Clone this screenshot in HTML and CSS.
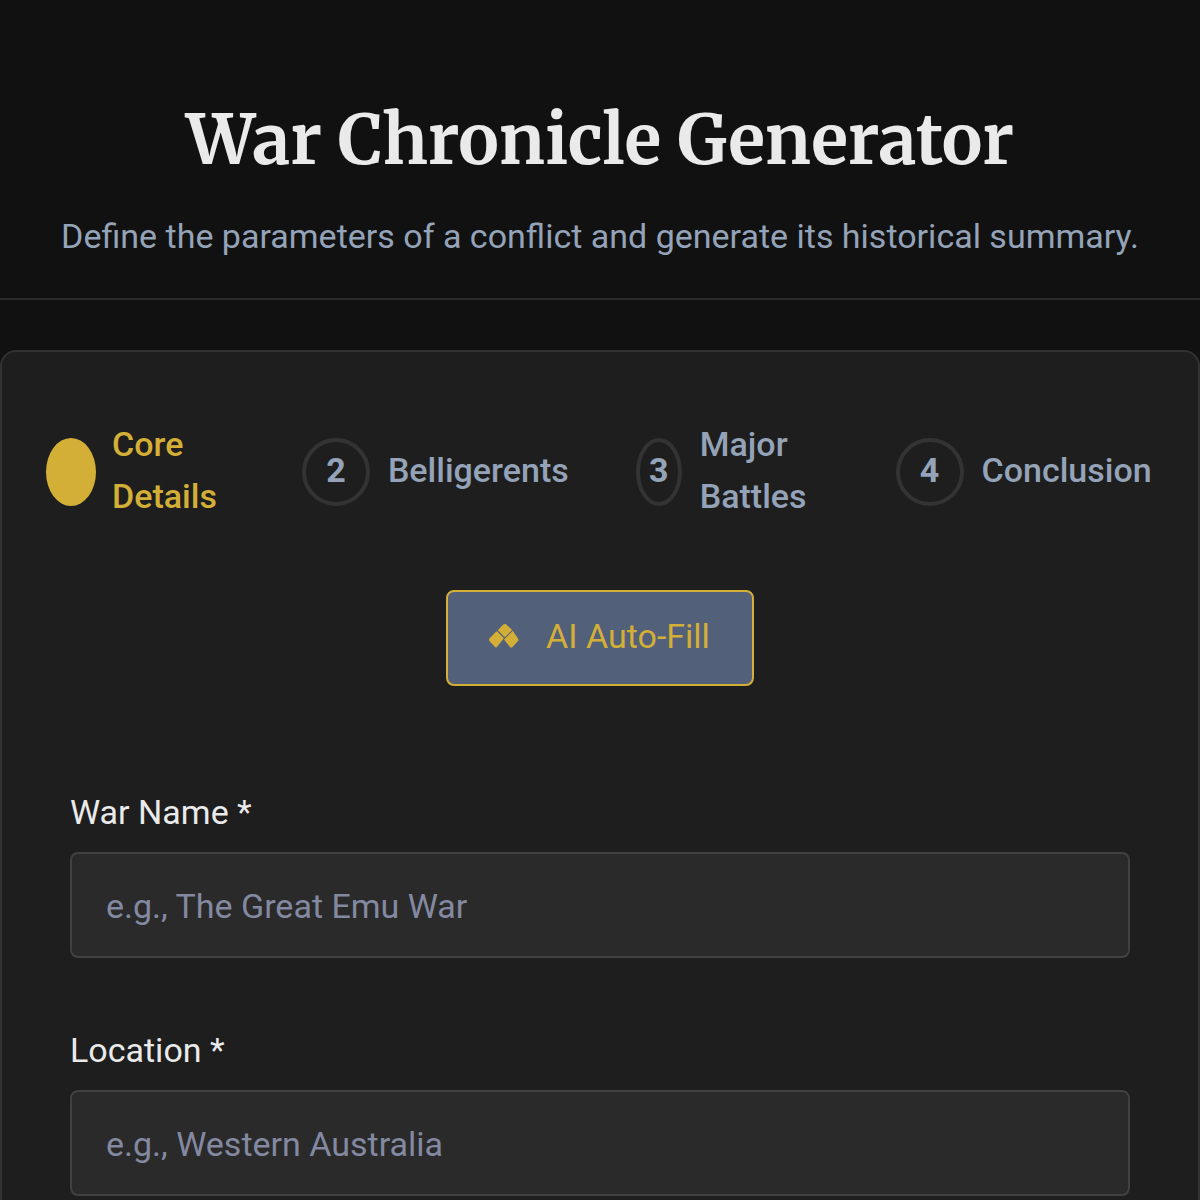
FILE: index.html
```html
<!DOCTYPE html>
<html lang="en">
  <head>
    <meta charset="UTF-8" />
    <meta name="viewport" content="width=device-width, initial-scale=1.0" />
    <title>War Chronicle Generator</title>
    <link rel="stylesheet" href="styles.css">
  </head>
  <body>
    <header class="page-header">
      <h1>War Chronicle Generator</h1>
      <p>Define the parameters of a conflict and generate its historical summary.</p>
    </header>

    <main class="card">
      <ol class="steps">
        <li class="step active">
          <span class="step-number"></span>
          <span class="step-label">Core Details</span>
        </li>
        <li class="step">
          <span class="step-number">2</span>
          <span class="step-label">Belligerents</span>
        </li>
        <li class="step">
          <span class="step-number">3</span>
          <span class="step-label">Major Battles</span>
        </li>
        <li class="step">
          <span class="step-number">4</span>
          <span class="step-label">Conclusion</span>
        </li>
      </ol>

      <button class="autofill-btn" type="button">
        <svg class="autofill-icon" viewBox="0 0 34 34" aria-hidden="true">
          <path d="M9.8 11.2 L14.8 6 Q16.8 4.2 18.8 6 L24.2 11 L16.8 18.2 Z" />
          <path d="M9 12.2 L16 19.2 L8.8 28 Q8 29 7 28 L1.4 22 Q0.4 20.8 1.4 19.6 L8 12.8 Z" />
          <path d="M24.8 11.8 L30 19.4 Q31 20.8 30 22 L24.2 28.2 Q23.2 29 22.2 28.2 L16 20.4 Z" />
        </svg>
        AI Auto-Fill
      </button>

      <form class="war-form">
        <div class="field">
          <label for="warName">War Name *</label>
          <input type="text" id="warName" placeholder="e.g., The Great Emu War" required>
        </div>
        <div class="field">
          <label for="location">Location *</label>
          <input type="text" id="location" placeholder="e.g., Western Australia" required>
        </div>
      </form>
    </main>
  </body>
</html>
```
FILE: styles.css
```css
* {
  box-sizing: border-box;
}

body {
  margin: 0;
  background: #111111;
  color: #eaeaea;
  font-family: Roboto, sans-serif;
  font-size: 34px;
  line-height: 52px;
}

.page-header {
  padding: 98px 32px 36px;
  border-bottom: 2px solid #2a2a2a;
  text-align: center;
}

.page-header h1 {
  margin: 0 0 28px;
  font-family: Merriweather, "DejaVu Serif Condensed", "DejaVu Serif", serif;
  font-size: 68px;
  font-weight: 700;
  line-height: 84px;
}

.page-header p {
  margin: 0;
  color: #94a3b8;
}

.card {
  margin-top: 50px;
  padding: 66px 0 4px;
  background: #1e1e1e;
  border: 2px solid #333333;
  border-bottom: none;
  border-radius: 16px 16px 0 0;
}

.steps {
  display: flex;
  gap: 67px;
  margin: 0;
  padding: 0 48px 0 44px;
  list-style: none;
}

.step {
  display: flex;
  align-items: center;
  gap: 18px;
  color: #94a3b8;
  font-weight: 500;
}

.step-number,
.step-label {
  padding-bottom: 4px;
}

.step-number {
  display: flex;
  align-items: center;
  justify-content: center;
  width: 68px;
  height: 68px;
  border: 4px solid #333333;
  border-radius: 50%;
  font-weight: 700;
}

.step.active {
  gap: 16px;
  color: #d4af37;
}

.step.active .step-number {
  min-width: 50px;
  background: #d4af37;
  border-color: #d4af37;
}

.autofill-btn {
  display: flex;
  align-items: center;
  gap: 24px;
  margin: 64px auto 0;
  padding: 18px 42px 22px 40px;
  background: #526079;
  border: 2px solid #d4af37;
  border-radius: 8px;
  color: #d4af37;
  font: inherit;
  cursor: pointer;
}

.autofill-icon {
  width: 34px;
  height: 34px;
  fill: currentColor;
}

.war-form {
  display: grid;
  gap: 66px;
  padding: 100px 68px 0;
}

.field {
  display: grid;
  gap: 14px;
}

.field input {
  width: 100%;
  height: 106px;
  padding: 2px 34px 0;
  background: #2a2a2a;
  border: 2px solid #404040;
  border-radius: 8px;
  color: #eaeaea;
  font: inherit;
}

.field input::placeholder {
  color: #8389a0;
  opacity: 1;
}
```
